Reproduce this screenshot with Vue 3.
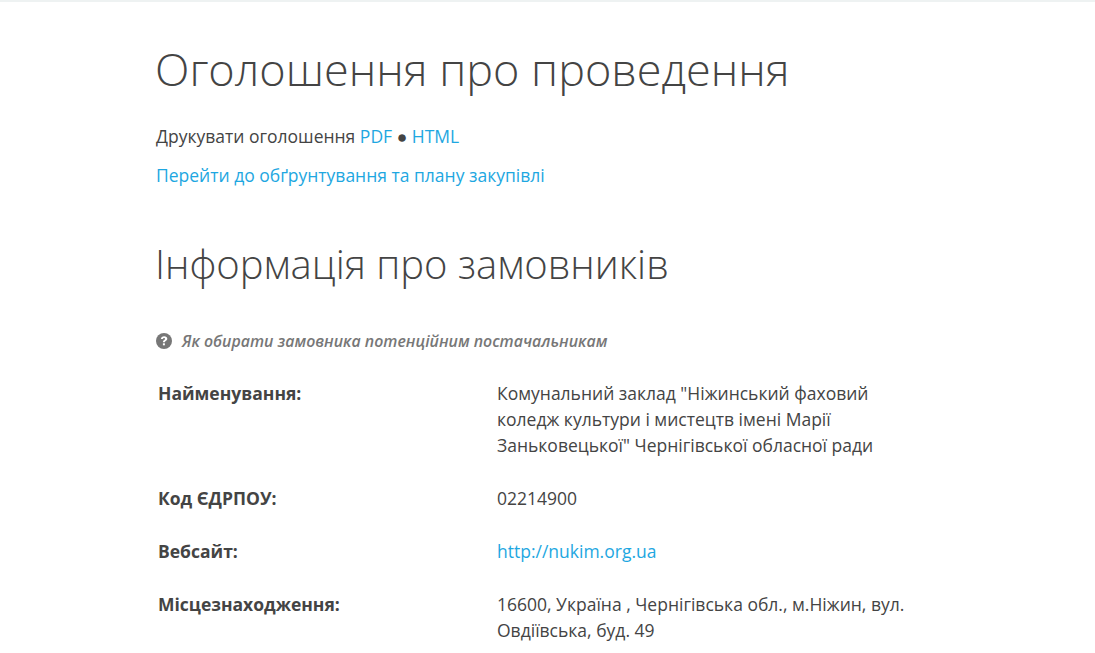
<script setup>
const rows = [
  { label: 'Найменування:', lines: ['Комунальний заклад "Ніжинський фаховий', 'коледж культури і мистецтв імені Марії', 'Заньковецької" Чернігівської обласної ради'] },
  { label: 'Код ЄДРПОУ:', lines: ['02214900'] },
  { label: 'Вебсайт:', link: 'http://nukim.org.ua' },
  { label: 'Місцезнаходження:', lines: ['16600, Україна , Чернігівська обл., м.Ніжин, вул.', 'Овдіївська, буд. 49'] },
]
</script>

<template>
  <div class="page">
    <h1 class="title">Оголошення про проведення</h1>
    <p class="print">Друкувати оголошення <a>PDF</a> ● <a>HTML</a></p>
    <p class="plan"><a>Перейти до обґрунтування та плану закупівлі</a></p>
    <h2 class="subtitle">Інформація про замовників</h2>
    <p class="hint">
      <svg class="icon" viewBox="0 0 16 16" width="16" height="16">
        <circle cx="8" cy="8" r="8" fill="#777" />
        <path d="M4.9 5.9C5.1 4.2 6.4 3.2 8.2 3.2c1.8 0 3.1 1 3.1 2.5 0 1.1-.7 1.7-1.5 2.2-.6.4-.9.7-.9 1.4H6.9c0-1.2.4-1.8 1.2-2.3.6-.4 1-.7 1-1.2 0-.6-.4-.9-1-.9s-1.1.4-1.2 1.1z" fill="#fff" />
        <rect x="6.9" y="10.3" width="2" height="2" fill="#fff" />
      </svg>
      <em>Як обирати замовника потенційним постачальникам</em>
    </p>
    <dl class="info">
      <div v-for="row in rows" :key="row.label" class="row">
        <dt>{{ row.label }}</dt>
        <dd>
          <a v-if="row.link">{{ row.link }}</a>
          <template v-else>
            <span v-for="line in row.lines" :key="line" class="line">{{ line }}</span>
          </template>
        </dd>
      </div>
    </dl>
  </div>
</template>

<style>
html, body { margin: 0; background: #fff; overflow: hidden; }
</style>

<style scoped>
.page {
  height: 653px;
  box-sizing: border-box;
  border-top: 2px solid #eef2f2;
  padding: 0 156px;
  font-family: "Open Sans", sans-serif;
  font-size: 17.5px;
  line-height: 26px;
  color: #444;
  overflow: hidden;
}
a { color: #1ea7e1; }
.title {
  margin: 37px 0 0 -1px;
  font-size: 45px;
  line-height: 60px;
  font-weight: 300;
}
.print { margin: 24px 0 0; }
.plan { margin: 13px 0 0; }
.subtitle {
  margin: 50px 0 0 -1px;
  font-size: 40px;
  line-height: 52px;
  font-weight: 300;
}
.hint {
  margin: 38px 0 0;
  display: flex;
  align-items: center;
  gap: 10px;
  font-size: 15.9px;
  color: #777;
}
.hint em { font-weight: 600; font-style: italic; }
.icon { flex: none; }
.info { margin: 26px 0 0 2px; }
.row {
  display: grid;
  grid-template-columns: 339px 1fr;
  margin-bottom: 27px;
}
dt { font-weight: 700; }
dd { margin: 0; }
.line { display: block; white-space: nowrap; }
</style>
